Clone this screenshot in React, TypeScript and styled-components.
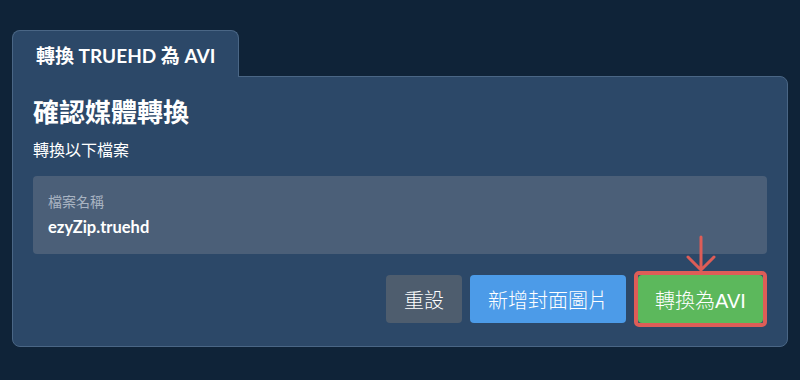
import React from "react";
import styled, { createGlobalStyle } from "styled-components";

const Global = createGlobalStyle`
  html, body { margin: 0; padding: 0; background: #0f2338; }
  body { font-family: Lato, "Noto Sans CJK TC", sans-serif; color: #fff; }
  * { box-sizing: border-box; }
`;

const Page = styled.div`
  width: 800px;
  height: 380px;
  padding: 30px 12px 0 12px;
  background: #0f2338;
`;

const TabBar = styled.div`
  display: flex;
`;

const Tab = styled.div`
  position: relative;
  z-index: 1;
  height: 47px;
  margin-bottom: -1px;
  padding: 0 23px;
  display: flex;
  align-items: center;
  background: #2c4868;
  border: 1px solid #4a6685;
  border-bottom: none;
  border-radius: 8px 8px 0 0;
  font-size: 19px;
  font-weight: 700;
  color: #fff;
`;

const Panel = styled.div`
  width: 776px;
  height: 271px;
  padding: 20px 20px 0 20px;
  background: #2c4868;
  border: 1px solid #4a6685;
  border-radius: 0 8px 8px 8px;
  display: flex;
  flex-direction: column;
`;

const Heading = styled.h3`
  margin: 0;
  font-size: 26px;
  line-height: 31px;
  font-weight: 700;
  color: #fff;
`;

const Sub = styled.p`
  margin: 10px 0 0 0;
  font-size: 16px;
  line-height: 24px;
  color: #fff;
`;

const Field = styled.div`
  margin-top: 14px;
  height: 78px;
  padding: 15px 15px 0 15px;
  background: #4b5f78;
  border-radius: 4px;
  display: flex;
  flex-direction: column;
`;

const Label = styled.div`
  font-size: 14px;
  line-height: 21px;
  color: #a9b4c2;
`;

const Value = styled.div`
  margin-top: 3px;
  font-size: 16.5px;
  line-height: 24px;
  font-weight: 700;
  color: #fff;
`;

const Actions = styled.div`
  margin-top: 17px;
  display: flex;
  justify-content: flex-end;
  align-items: center;
  gap: 8px;
`;

const Button = styled.button<{ $bg: string; $width?: number }>`
  height: 48px;
  ${(p) => (p.$width ? `width: ${p.$width}px; padding: 0;` : "padding: 0 18px;")}
  border: none;
  border-radius: 4px;
  background: ${(p) => p.$bg};
  color: #fff;
  font-family: "Liberation Sans", "Noto Sans CJK TC", sans-serif;
  font-size: 20px;
  font-weight: 300;
  white-space: nowrap;
  display: flex;
  align-items: center;
  justify-content: center;
  cursor: pointer;
`;

const Highlight = styled.div`
  position: relative;
  border: 4.5px solid #dd5d57;
  border-radius: 5px;
  display: flex;
`;

const Arrow = styled.svg`
  position: absolute;
  left: 50%;
  top: -39px;
  transform: translateX(-50%);
  overflow: visible;
`;

export default function App() {
  return (
    <>
      <Global />
      <Page>
        <TabBar>
          <Tab>轉換 TRUEHD 為 AVI</Tab>
        </TabBar>
        <Panel>
          <Heading>確認媒體轉換</Heading>
          <Sub>轉換以下檔案</Sub>
          <Field>
            <Label>檔案名稱</Label>
            <Value>ezyZip.truehd</Value>
          </Field>
          <Actions>
            <Button $bg="#4e5d6e">重設</Button>
            <Button $bg="#4c9be8">新增封面圖片</Button>
            <Highlight>
              <Arrow width="30" height="36" viewBox="0 0 30 36">
                <path
                  d="M15 1 V34 M2 21 L15 34 L28 21"
                  fill="none"
                  stroke="#dd5d57"
                  strokeWidth="3"
                  strokeLinecap="round"
                  strokeLinejoin="round"
                />
              </Arrow>
              <Button $bg="#5cb85c" $width={125}>轉換為AVI</Button>
            </Highlight>
          </Actions>
        </Panel>
      </Page>
    </>
  );
}
